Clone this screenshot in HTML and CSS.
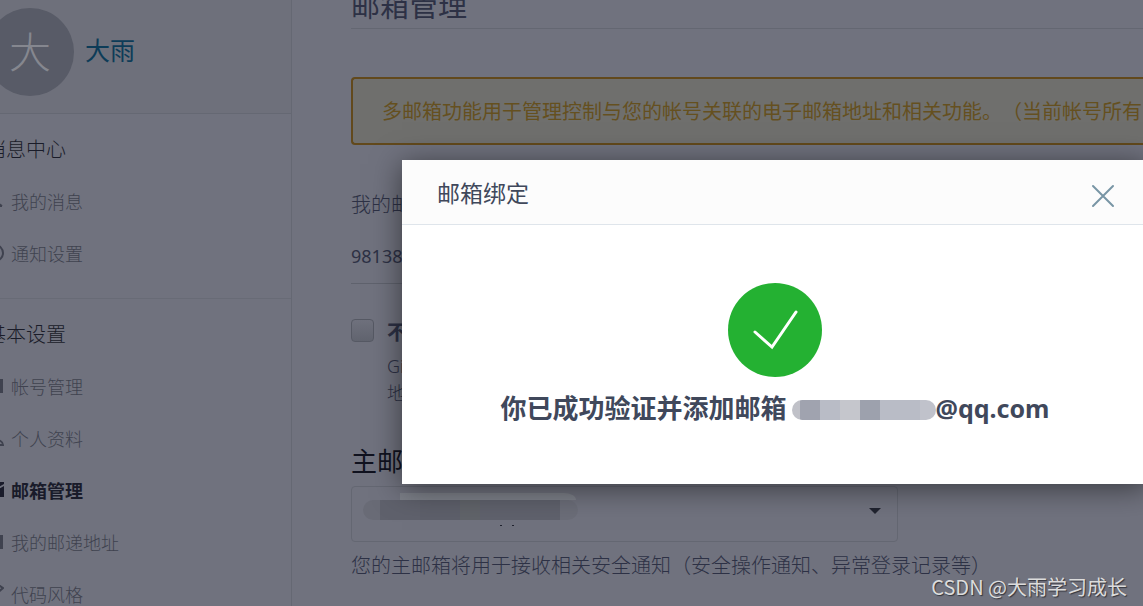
FILE: index.html
```html
<!DOCTYPE html>
<html lang="zh-CN">
<head>
    <meta charset="UTF-8">
    <meta name="viewport" content="width=device-width, initial-scale=1.0">
    <title>邮箱管理</title>
    <link rel="stylesheet" href="styles.css">
</head>
<body>
    <div class="page">
        <aside class="sidebar">
            <div class="profile">
                <div class="avatar">大</div>
                <a href="#" class="profile-name">大雨</a>
            </div>
            <nav class="menu">
                <h3 class="menu-title">消息中心</h3>
                <a href="#" class="menu-item">
                    <svg class="icon" viewBox="0 0 18 18"><path d="M3 14h13M5 14V8a4 4 0 0 1 8 0v4l3 2"/></svg>
                    <span>我的消息</span>
                </a>
                <a href="#" class="menu-item">
                    <svg class="icon" viewBox="0 0 18 18"><circle cx="9" cy="9" r="8"/><path d="M9 5v4h4"/></svg>
                    <span>通知设置</span>
                </a>
            </nav>
            <nav class="menu">
                <h3 class="menu-title">基本设置</h3>
                <a href="#" class="menu-item">
                    <svg class="icon" viewBox="0 0 18 18"><path d="M1 3h13v12H1zM16 2v14"/></svg>
                    <span>帐号管理</span>
                </a>
                <a href="#" class="menu-item">
                    <svg class="icon" viewBox="0 0 18 18"><circle cx="9" cy="5" r="4"/><path d="M1 16c0-7 16-7 16 0z"/></svg>
                    <span>个人资料</span>
                </a>
                <a href="#" class="menu-item active">
                    <svg class="icon icon-solid" viewBox="0 0 18 18"><path d="M0 5l9 5 9-5v11H0zM0 1h18v2l-9 5-9-5z"/></svg>
                    <span>邮箱管理</span>
                </a>
                <a href="#" class="menu-item">
                    <svg class="icon" viewBox="0 0 18 18"><path d="M1 3h13v12H1zM16 2v14"/></svg>
                    <span>我的邮递地址</span>
                </a>
                <a href="#" class="menu-item">
                    <svg class="icon" viewBox="0 0 18 18"><path d="M2 14l2-5L14 1l3 2L7 12z"/></svg>
                    <span>代码风格</span>
                </a>
            </nav>
        </aside>

        <main class="content">
            <h1 class="content-title">邮箱管理</h1>
            <div class="notice">多邮箱功能用于管理控制与您的帐号关联的电子邮箱地址和相关功能。（当前帐号所有</div>

            <p class="label">我的邮箱</p>
            <div class="mail-row">98138</div>

            <div class="option">
                <input type="checkbox" id="hide-mail" class="checkbox">
                <div>
                    <label for="hide-mail" class="option-title">不公开</label>
                    <p class="option-text">Gitee<br>地址</p>
                </div>
            </div>

            <label for="main-mail" class="field-title">主邮箱</label>
            <div class="select-wrap">
                <select id="main-mail" class="select">
                    <option></option>
                </select>
                <span class="mask mask-dark"></span>
                <svg class="caret" viewBox="0 0 12 6"><path d="M0 0h12L6 6z"/></svg>
            </div>
            <p class="field-help">您的主邮箱将用于接收相关安全通知（安全操作通知、异常登录记录等）</p>
        </main>
    </div>

    <div class="modal" role="dialog" aria-labelledby="modal-title">
        <div class="modal-header">
            <h2 id="modal-title" class="modal-title">邮箱绑定</h2>
            <button type="button" class="close" aria-label="关闭">
                <svg viewBox="0 0 24 24"><path d="M2 2l20 20M22 2L2 22"/></svg>
            </button>
        </div>
        <div class="modal-body">
            <svg class="success" viewBox="0 0 94 94">
                <circle cx="47" cy="47" r="47"/>
                <path d="M27 49l17 15 24-35"/>
            </svg>
            <p class="result">
                <span>你已成功验证并添加邮箱</span>
                <span class="mask mask-light"></span>
                <span class="result-mail">@qq.com</span>
            </p>
        </div>
    </div>

    <div class="watermark">CSDN @大雨学习成长</div>
</body>
</html>
```

FILE: styles.css
```css
* {
    box-sizing: border-box;
}

body {
    margin: 0;
    height: 100vh;
    overflow: hidden;
    position: relative;
    background-color: #70727e;
    color: #2d3145;
    font-family: "Noto Sans", "Noto Sans CJK SC", sans-serif;
    font-size: 20px;
    font-weight: 400;
    text-spacing-trim: space-all;
}

h1, h2, h3, p {
    margin: 0;
    font-weight: inherit;
}

a {
    text-decoration: none;
}

.page {
    display: flex;
    margin-left: -14px;
    height: 100vh;
    overflow: hidden;
}

/* Sidebar */
.sidebar {
    flex: 0 0 306px;
    border-right: 1px solid #656873;
}

.profile {
    display: flex;
    align-items: center;
    gap: 11px;
    height: 114px;
    padding-bottom: 10px;
    background-color: #6e707b;
    border-bottom: 1px solid #656873;
}

.avatar {
    width: 88px;
    height: 88px;
    border-radius: 50%;
    background-color: #585b67;
    color: #85878f;
    font-size: 42px;
    font-weight: 300;
    line-height: 88px;
    text-align: center;
}

.profile-name {
    padding-bottom: 6px;
    color: #0d3c58;
    font-size: 25px;
}

.menu {
    padding-bottom: 19px;
    border-bottom: 1px solid #686b76;
}

.menu-title {
    height: 61px;
    padding-top: 8px;
    color: #1a1c29;
    font-size: 20px;
    font-weight: 300;
    line-height: 56px;
}

.menu-item {
    display: flex;
    align-items: center;
    gap: 7px;
    height: 52px;
    color: #3f424f;
    font-size: 18px;
    font-weight: 300;
}

.menu-item.active {
    color: #191b2a;
    font-weight: 700;
}

.icon {
    width: 18px;
    height: 18px;
    fill: none;
    stroke: currentColor;
    stroke-width: 2;
}

.icon-solid {
    fill: currentColor;
    stroke: none;
}

/* Content */
.content {
    flex: 1;
    min-width: 0;
    padding-left: 59px;
}

.content-title {
    height: 29px;
    border-bottom: 1px solid #646772;
    font-size: 29px;
    line-height: 12px;
}

.notice {
    margin-top: 48px;
    padding: 0 29px;
    height: 68px;
    border: 2px solid #62491c;
    border-right: 0;
    border-radius: 4px 0 0 4px;
    background-color: #6f6f6d;
    color: #65501f;
    line-height: 66px;
    white-space: nowrap;
}

.label {
    margin-top: 45px;
    line-height: 30px;
}

.mail-row {
    margin-top: 15px;
    height: 49px;
    border-bottom: 1px solid #5f626d;
    font-size: 18px;
    line-height: 42px;
}

.option {
    display: flex;
    gap: 13px;
    margin-top: 32px;
    height: 120px;
}

.checkbox {
    appearance: none;
    width: 23px;
    height: 23px;
    margin: 3px 0 0;
    border: 1px solid #565964;
    border-radius: 4px;
    background: linear-gradient(#6f717d, #61646f);
}

.option-title {
    display: block;
    font-weight: 700;
    line-height: 34px;
}

.option-text {
    margin-top: 3px;
    font-size: 18px;
    line-height: 27px;
}

.field-title {
    display: block;
    color: #10121f;
    font-size: 26px;
    line-height: 50px;
}

.select-wrap {
    position: relative;
    max-width: 547px;
}

.select {
    display: block;
    appearance: none;
    width: 100%;
    height: 56px;
    border: 1px solid #646772;
    border-radius: 4px;
    background-color: transparent;
}

.caret {
    position: absolute;
    top: 22px;
    right: 17px;
    width: 12px;
    height: 6px;
    fill: #20232f;
}

.field-help {
    line-height: 48px;
    white-space: nowrap;
}

.label,
.field-help,
.option-text {
    font-weight: 300;
}

/* Hidden part of a mail address */
.mask {
    display: block;
    border-radius: 10px;
}

.mask-dark {
    position: absolute;
    top: 14px;
    left: 12px;
    width: 215px;
    height: 20px;
    background: linear-gradient(90deg, #696b76 17px, #5f616c 17px 57px, #5d5f6a 57px 97px, #606369 97px 117px, #5f616c 117px 197px, #6b6d78 197px);
}

.mask-dark::before {
    content: "";
    position: absolute;
    top: -7px;
    left: 37px;
    width: 176px;
    height: 7px;
    border-top-right-radius: 12px 7px;
    background-color: #7d8089;
}

.mask-dark::after {
    content: "";
    position: absolute;
    top: 25px;
    left: 137px;
    width: 14px;
    height: 1px;
    background: linear-gradient(90deg, #20232f 2px, transparent 2px 12px, #20232f 12px);
}

.mask-light {
    width: 144px;
    height: 20px;
    margin: 2px 0 0 5px;
    background: linear-gradient(90deg, #c0c1c8 8px, #a0a3af 8px 28px, #b9bcc6 28px 48px, #c5c6cc 48px 68px, #9da1ad 68px 88px, #b9bcc6 88px 128px, #c0c2cb 128px);
}

/* Modal */
.modal {
    position: absolute;
    top: 160px;
    left: 402px;
    right: -5px;
    background-color: #fff;
    color: #40485b;
    box-shadow: 0 4px 28px rgba(0, 0, 0, 0.5);
}

.modal-header {
    display: flex;
    align-items: center;
    justify-content: space-between;
    height: 65px;
    padding: 0 33px 0 35px;
    border-bottom: 1px solid #dfe5eb;
    background-color: #fcfcfc;
}

.modal-title {
    font-size: 23px;
}

.close {
    width: 24px;
    height: 24px;
    margin-top: 8px;
    padding: 0;
    border: 0;
    background: none;
}

.close svg {
    display: block;
    fill: none;
    stroke: #7895a5;
    stroke-width: 2;
    stroke-linecap: round;
}

.modal-body {
    display: flex;
    flex-direction: column;
    align-items: center;
    padding: 58px 0 56px;
}

.success {
    width: 94px;
    height: 94px;
    fill: #24b132;
}

.success path {
    fill: none;
    stroke: #fff;
    stroke-width: 3;
    stroke-linecap: round;
}

.result {
    display: flex;
    align-items: center;
    margin-top: 12px;
    font-size: 26px;
    font-weight: 700;
    line-height: 39px;
}

.result-mail {
    font-size: 25px;
}

.watermark {
    position: absolute;
    right: 16px;
    bottom: 4px;
    color: #dcdcdc;
    font-family: "Noto Sans CJK SC", sans-serif;
    font-size: 20px;
    line-height: 30px;
    text-shadow: 1px 1px 1px #33353d;
}
```
